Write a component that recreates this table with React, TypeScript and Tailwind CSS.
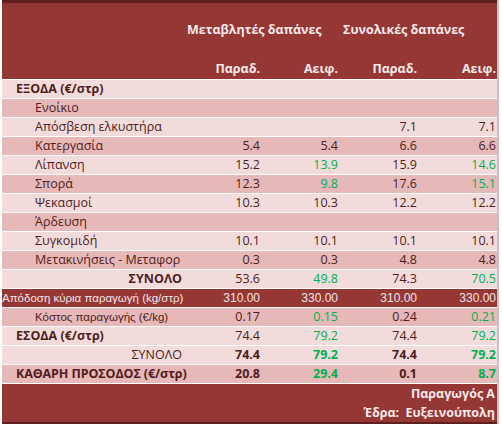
import React from "react";

type Cell = { v: string; g?: boolean; b?: boolean };
type Row = {
  label: string;
  kind: "head" | "sub" | "total" | "yield" | "cost" | "net" | "total2";
  bg: "light" | "dark" | "red";
  cells: Cell[];
};

const n = (v: string, g = false, b = false): Cell => ({ v, g, b });
const E: Cell = { v: "" };

const rows: Row[] = [
  { label: "ΕΞΟΔΑ (€/στρ)", kind: "head", bg: "light", cells: [E, E, E, E] },
  { label: "Ενοίκιο", kind: "sub", bg: "dark", cells: [E, E, E, E] },
  { label: "Απόσβεση ελκυστήρα", kind: "sub", bg: "light", cells: [E, E, n("7.1"), n("7.1")] },
  { label: "Κατεργασία", kind: "sub", bg: "dark", cells: [n("5.4"), n("5.4"), n("6.6"), n("6.6")] },
  { label: "Λίπανση", kind: "sub", bg: "light", cells: [n("15.2"), n("13.9", true), n("15.9"), n("14.6", true)] },
  { label: "Σπορά", kind: "sub", bg: "dark", cells: [n("12.3"), n("9.8", true), n("17.6"), n("15.1", true)] },
  { label: "Ψεκασμοί", kind: "sub", bg: "light", cells: [n("10.3"), n("10.3"), n("12.2"), n("12.2")] },
  { label: "Άρδευση", kind: "sub", bg: "dark", cells: [E, E, E, E] },
  { label: "Συγκομιδή", kind: "sub", bg: "light", cells: [n("10.1"), n("10.1"), n("10.1"), n("10.1")] },
  { label: "Μετακινήσεις - Μεταφορ", kind: "sub", bg: "dark", cells: [n("0.3"), n("0.3"), n("4.8"), n("4.8")] },
  { label: "ΣΥΝΟΛΟ", kind: "total", bg: "light", cells: [n("53.6"), n("49.8", true), n("74.3"), n("70.5", true)] },
  { label: "Απόδοση κύρια παραγωγή (kg/στρ)", kind: "yield", bg: "red", cells: [n("310.00"), n("330.00"), n("310.00"), n("330.00")] },
  { label: "Κόστος παραγωγής (€/kg)", kind: "cost", bg: "dark", cells: [n("0.17"), n("0.15", true), n("0.24"), n("0.21", true)] },
  { label: "ΕΣΟΔΑ (€/στρ)", kind: "head", bg: "light", cells: [n("74.4"), n("79.2", true), n("74.4"), n("79.2", true)] },
  { label: "ΣΥΝΟΛΟ", kind: "total2", bg: "light", cells: [n("74.4", false, true), n("79.2", true, true), n("74.4", false, true), n("79.2", true, true)] },
  { label: "ΚΑΘΑΡΗ ΠΡΟΣΟΔΟΣ (€/στρ)", kind: "net", bg: "dark", cells: [n("20.8", false, true), n("29.4", true, true), n("0.1", false, true), n("8.7", true, true)] },
];

const grid = "grid grid-cols-[184px_75px_78px_79px_79px]";

function Label({ row }: { row: Row }) {
  switch (row.kind) {
    case "head":
      return <div className="pl-[14px] font-bold whitespace-nowrap">{row.label}</div>;
    case "sub":
      return <div className="pl-[33px] whitespace-nowrap overflow-hidden">{row.label}</div>;
    case "total":
      return <div className="pr-[4px] text-right font-bold whitespace-nowrap">{row.label}</div>;
    case "total2":
      return <div className="pr-[4px] text-right whitespace-nowrap">{row.label}</div>;
    case "yield":
      return (
        <div className="pl-0 whitespace-nowrap overflow-hidden text-[11.5px] text-[#f4e6e6] font-['Liberation_Sans',sans-serif]">
          {row.label}
        </div>
      );
    case "cost":
      return (
        <div className="pl-[33px] whitespace-nowrap overflow-hidden text-[11.5px] font-['Liberation_Sans',sans-serif]">
          {row.label}
        </div>
      );
    case "net":
      return <div className="pl-[14px] font-bold whitespace-nowrap tracking-[-0.1px]">{row.label}</div>;
  }
}

export default function App() {
  return (
    <div className="w-[502px] h-[427px] bg-white font-['Open_Sans',sans-serif] text-[12.5px] text-[#4f1d1c]">
      <div className="ml-[2px] w-[497px] border-r-2 border-[#c4c4c4]">
        <div className="h-[3px] bg-[#5e1f1e]" />
        <div className="h-[76px] bg-[#953735] text-[#f6e9e9] font-bold">
          <div className={`${grid} h-[38px] items-end pb-[1px]`}>
            <div />
            <div className="col-span-2 pl-[1px] whitespace-nowrap">Μεταβλητές δαπάνες</div>
            <div className="col-span-2 pl-[4px] whitespace-nowrap">Συνολικές δαπάνες</div>
          </div>
          <div className={`${grid} h-[38px] items-end`}>
            <div />
            <div className="text-right pr-[1px]">Παραδ.</div>
            <div className="text-right pr-[1px]">Αειφ.</div>
            <div className="text-right pr-[1px]">Παραδ.</div>
            <div className="text-right pr-[1px]">Αειφ.</div>
          </div>
        </div>
        {rows.map((row, i) => (
          <div
            key={i}
            className={`${grid} h-[19px] border-t border-white items-center leading-[18px] ${
              row.bg === "light" ? "bg-[#f2dcdb]" : row.bg === "dark" ? "bg-[#e6b8b7]" : "bg-[#953735]"
            }`}
          >
            <Label row={row} />
            {row.cells.map((c, j) => (
              <div
                key={j}
                className={`text-right pr-[1px] whitespace-nowrap ${c.b ? "font-bold" : ""} ${
                  row.kind === "yield"
                    ? "text-[#f4e6e6] font-['Liberation_Sans',sans-serif] text-[12px]"
                    : c.g
                    ? "text-[#00b050]"
                    : ""
                }`}
              >
                {c.v}
              </div>
            ))}
          </div>
        ))}
        <div className="h-[39px] border-t border-white bg-[#953735] text-[#f6e9e9] font-bold flex flex-col items-end justify-start pr-[2px] leading-[19px]">
          <div>Παραγωγός Α</div>
          <div>Έδρα:&nbsp; Ευξεινούπολη</div>
        </div>
        <div className="h-[2px] bg-[#5e1f1e]" />
      </div>
    </div>
  );
}
